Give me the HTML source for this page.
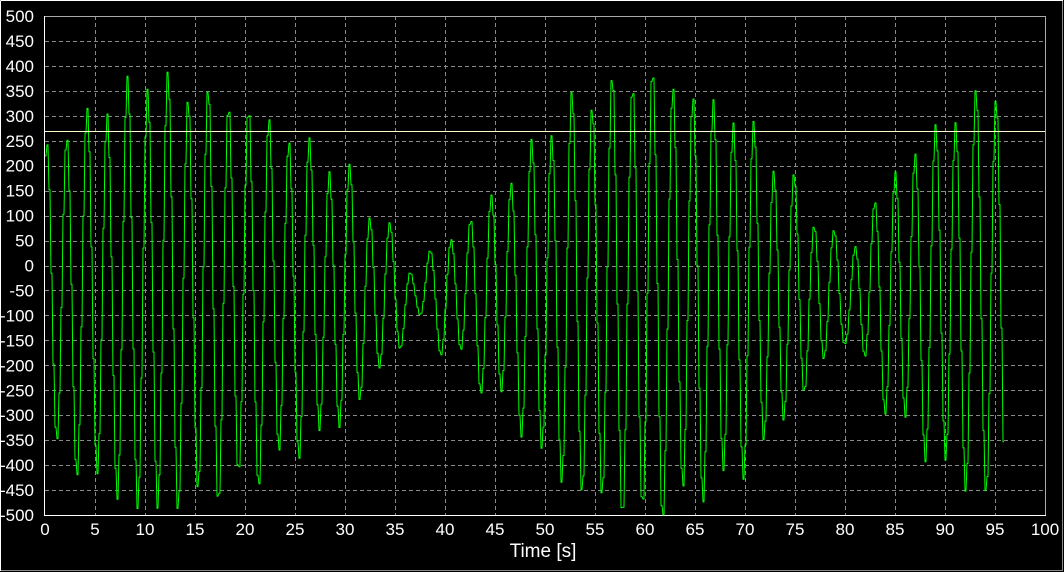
<!DOCTYPE html>
<html><head><meta charset="utf-8"><style>
html,body{margin:0;padding:0;background:#000;width:1064px;height:572px;overflow:hidden}
svg{display:block}
text{font-family:"Liberation Sans",sans-serif;fill:#fff}
</style></head><body>
<svg id="s" width="1064" height="572" xmlns="http://www.w3.org/2000/svg">
<rect x="0" y="0" width="1064" height="572" fill="#000"/>
<line x1="0.5" y1="0.5" x2="1063" y2="0.5" stroke="#fff"/>
<line x1="0.5" y1="0.5" x2="0.5" y2="571" stroke="#fff"/>
<line x1="1062.5" y1="1" x2="1062.5" y2="571" stroke="#888"/>
<line x1="1" y1="570.5" x2="1063" y2="570.5" stroke="#888"/>
<g id="grid" stroke="#888" stroke-dasharray="4,3" stroke-width="1"></g>
<line x1="45" y1="16.5" x2="1045.5" y2="16.5" stroke="#aaa"/>
<line x1="1045.5" y1="16" x2="1045.5" y2="515" stroke="#aaa"/>
<line x1="44.5" y1="16" x2="44.5" y2="515.5" stroke="#fff"/>
<line x1="44" y1="515.5" x2="1046" y2="515.5" stroke="#fff"/>
<g id="labels" font-size="17"></g>
<text x="543" y="557" font-size="19" text-anchor="middle">Time [s]</text>
<polyline id="sig" fill="none" stroke="#00ff00" stroke-width="1"/>
<line x1="45" y1="131.5" x2="1045" y2="131.5" stroke="#ffffcc" stroke-width="1"/>
</svg>
<script>
var ns="http://www.w3.org/2000/svg",g=document.getElementById('grid'),L=document.getElementById('labels');
function Y(v){return 16+(500-v)*0.499;}
function el(p,t,a,tx){var e=document.createElementNS(ns,t);for(var k in a)e.setAttribute(k,a[k]);if(tx!=null)e.textContent=tx;p.appendChild(e);return e;}
for(var v=-450;v<=450;v+=50){var y=Math.round(Y(v))+0.5;el(g,'line',{x1:45,y1:y,x2:1045,y2:y});}
for(var t=5;t<100;t+=5){var x=45+t*10+0.5;el(g,'line',{x1:x,y1:16,x2:x,y2:515});}
for(var v=-500;v<=500;v+=50){el(L,'text',{x:34,y:Y(v)+6,'text-anchor':'end'},v);}
for(var t=0;t<=100;t+=5){el(L,'text',{x:45+t*10,y:535,'text-anchor':'middle'},t);}
var env=[[0,300],[10,440],[20,380],[30,250],[37,50],[45,200],[52,380],[60,450],[70,350],[80,80],[85,250],[90,350],[95,420],[97,420]];
function E(t){for(var i=0;i<env.length-1;i++){if(t<=env[i+1][0]){var a=env[i],b=env[i+1],f=(t-a[0])/(b[0]-a[0]);return a[1]+(b[1]-a[1])*f;}}return 400;}
var pts=[];
for(var t=0;t<=96;t+=0.2){var v=-60+E(t)*Math.sin(2*Math.PI*t/2.02+1.2)+25*Math.sin(t*1.7);
v=Math.max(-500,Math.min(500,v));var x=45+t*10,y=Y(v);
pts.push(x.toFixed(1)+','+y.toFixed(1));pts.push((x+1).toFixed(1)+','+y.toFixed(1));}
document.getElementById('sig').setAttribute('points',pts.join(' '));
</script>
</body></html>
